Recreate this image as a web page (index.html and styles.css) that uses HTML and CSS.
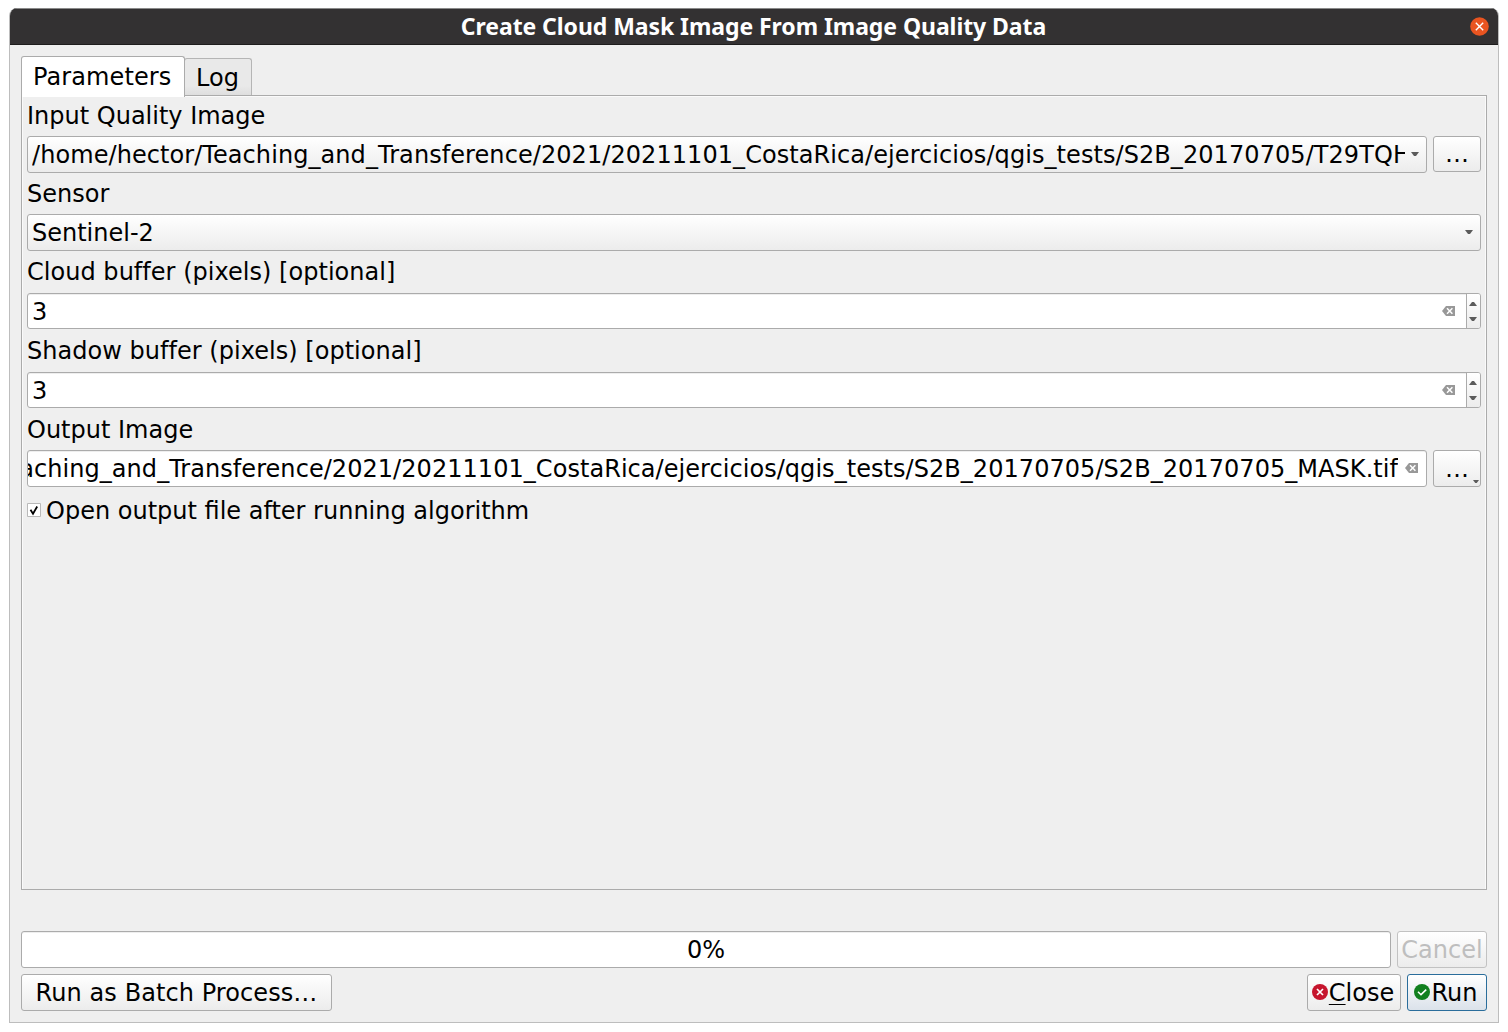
FILE: index.html
```html
<!DOCTYPE html>
<html lang="en">
<head>
<meta charset="utf-8">
<title>Create Cloud Mask Image From Image Quality Data</title>
<link rel="stylesheet" href="styles.css">
</head>
<body>
<svg class="defs" width="0" height="0" aria-hidden="true">
  <symbol id="down" viewBox="0 0 8 4"><path d="M0 0h8L5 4H3z" fill="#5b5b5b"/></symbol>
  <symbol id="up" viewBox="0 0 8 4"><path d="M0 4h8L5 0H3z" fill="#5b5b5b"/></symbol>
  <symbol id="clear" viewBox="0 0 13 10"><path d="M4 0h9v10H4L0 5z" fill="#989898"/><path d="M5 2.3l5.4 5.4M10.4 2.3l-5.4 5.4" stroke="#fff" stroke-width="1.5"/></symbol>
</svg>
<div class="window">
  <header class="titlebar">
    <h1 class="title">Create Cloud Mask Image From Image Quality Data</h1>
    <svg class="window-close" viewBox="0 0 19 19"><circle cx="9.5" cy="9.5" r="9.3" fill="#e95420"/><path d="M5.8 5.8l7.4 7.4M13.2 5.8l-7.4 7.4" stroke="#fff" stroke-width="1.4"/></svg>
  </header>
  <main class="content">
    <nav class="tabs">
      <div class="tab active">Parameters</div>
      <div class="tab">Log</div>
    </nav>
    <section class="pane">
      <div class="label first">Input Quality Image</div>
      <div class="row">
        <div class="box combo"><span class="value path">/home/hector/Teaching_and_Transference/2021/20211101_CostaRica/ejercicios/qgis_tests/S2B_20170705/T29TQH</span><svg class="arrow"><use href="#down"/></svg></div>
        <div class="box button browse short">…</div>
      </div>
      <div class="label sensor">Sensor</div>
      <div class="box combo"><span class="value">Sentinel-2</span><svg class="arrow"><use href="#down"/></svg></div>
      <div class="label cloud">Cloud buffer (pixels) [optional]</div>
      <div class="box spin"><span class="value">3</span><svg class="clear"><use href="#clear"/></svg><div class="steps"><svg class="arrow"><use href="#up"/></svg><svg class="arrow"><use href="#down"/></svg></div></div>
      <div class="label shadow">Shadow buffer (pixels) [optional]</div>
      <div class="box spin"><span class="value">3</span><svg class="clear"><use href="#clear"/></svg><div class="steps"><svg class="arrow"><use href="#up"/></svg><svg class="arrow"><use href="#down"/></svg></div></div>
      <div class="label output">Output Image</div>
      <div class="row">
        <div class="box line"><span class="value scrolled">aching_and_Transference/2021/20211101_CostaRica/ejercicios/qgis_tests/S2B_20170705/S2B_20170705_MASK.tif</span><svg class="clear"><use href="#clear"/></svg></div>
        <div class="box button browse menu">…<svg class="arrow corner"><use href="#down"/></svg></div>
      </div>
      <div class="check"><svg class="tick" viewBox="0 0 14 14"><path d="M.5 .5h13v13H.5z" fill="#fff" stroke="#b9b9b9"/><path d="M3.5 6.8L6 10.8 10.2 3.5" fill="none" stroke="#000" stroke-width="1.8"/></svg><span class="check-text">Open output file after running algorithm</span></div>
    </section>
    <div class="row progress-row">
      <div class="box progress">0%</div>
      <div class="box button cancel">Cancel</div>
    </div>
    <footer class="row actions">
      <div class="box button batch">Run as Batch Process…</div>
      <div class="box button close"><svg class="badge" viewBox="0 0 16 16"><circle cx="8" cy="8" r="8" fill="#c6152d"/><path d="M5 5l6 6M11 5l-6 6" stroke="#fff" stroke-width="1.7"/></svg><span><span class="mnemonic">C</span>lose</span></div>
      <div class="box button run"><svg class="badge" viewBox="0 0 16 16"><circle cx="8" cy="8" r="8" fill="#11801f"/><path d="M4 7.7l3 3 5.2-5" fill="none" stroke="#fff" stroke-width="1.6"/></svg><span>Run</span></div>
    </footer>
  </main>
</div>
</body>
</html>
```
FILE: styles.css
```css
* { box-sizing: border-box; }
body {
  margin: 0;
  padding: 8px 9px 9px;
  background: #fff;
  font: 24px/28px "DejaVu Sans", sans-serif;
  color: #000;
  white-space: nowrap;
}
.defs { display: block; width: 0; height: 0; }
.window {
  display: flex;
  flex-direction: column;
  height: 1015px;
  border: 1px solid #bdbdbd;
  border-top: 0;
  border-radius: 8px 8px 0 0;
  background: #efefef;
  overflow: hidden;
}
.titlebar {
  display: grid;
  grid-template-columns: 27px 1fr 28px;
  align-items: center;
  height: 37px;
  flex: none;
  background: #333132;
  border-top: 1px solid #8a8a8a;
  border-bottom: 1px solid #1e1d1d;
  color: #fff;
}
.title {
  grid-column: 2;
  margin: 0;
  padding-bottom: 2px;
  text-align: center;
  font: bold 23px/30px "Noto Sans", sans-serif;
  letter-spacing: -0.07px;
}
.window-close { width: 19px; height: 19px; }
.content {
  flex: 1;
  display: flex;
  flex-direction: column;
  padding: 11px;
}
.tabs {
  display: flex;
  align-items: flex-end;
  height: 39px;
  flex: none;
}
.tab {
  height: 37px;
  padding: 5px 11px 0;
  border: 1px solid #b5b5b5;
  border-bottom: 0;
  border-radius: 3px 3px 0 0;
  background: linear-gradient(#e9e9e9 75%, #dedede);
  width: 68px;
  margin-left: -1px;
}
.tab.active {
  position: relative;
  width: 164px;
  height: 41px;
  margin: 0 0 -2px;
  padding-top: 6px;
  border-color: #ababab;
  background: #fff;
  letter-spacing: 0.1px;
}
.pane {
  height: 795px;
  flex: none;
  padding: 0 5px;
  border: 1px solid #ababab;
  box-shadow: inset 1px 1px #fafafa, inset -1px 0 #fafafa;
}
.label { height: 42px; padding-top: 7px; letter-spacing: 0.03px; }
.label.first { height: 40px; padding-top: 6px; letter-spacing: 0; }
.label.sensor { height: 41px; letter-spacing: 0; }
.label.shadow { height: 43px; padding-top: 8px; }
.label.output { padding-top: 8px; letter-spacing: 0; }
.row { display: flex; gap: 6px; }
.box {
  display: flex;
  align-items: center;
  height: 37px;
  border: 1px solid #ababab;
  border-radius: 3px;
  background: #fff;
  overflow: hidden;
}
.combo, .button { background: linear-gradient(#fff, #ececec); }
.row .combo, .line, .progress { flex: 1; min-width: 0; }
.combo { padding: 0 7px 0 4px; }
.combo .arrow { margin-bottom: 1px; }
.value { flex: 1; min-width: 0; overflow: hidden; }
.path { margin-right: 6px; letter-spacing: 0.07px; }
.arrow { width: 8px; height: 4px; flex: none; display: block; }
.button { justify-content: center; }
.browse { width: 48px; }
.short { height: 36px; }
.spin { height: 36px; padding-left: 4px; box-shadow: inset 0 1px #eee; }
.spin .value { padding-top: 1px; }
.clear { width: 13px; height: 10px; flex: none; }
.spin .clear { margin-right: 11px; }
.steps {
  display: flex;
  flex-direction: column;
  justify-content: space-between;
  align-items: flex-start;
  width: 14px;
  height: 34px;
  padding: 8px 0 7px 2px;
  border-left: 1px solid #ababab;
  background: linear-gradient(#fff, #ececec);
}
.line { padding-right: 8px; box-shadow: inset 0 1px #eee; }
.line .clear { margin-bottom: 1px; }
.scrolled {
  display: flex;
  justify-content: flex-end;
  margin-right: 7px;
  letter-spacing: 0.05px;
}
.menu { position: relative; }
.corner { position: absolute; right: 1px; bottom: 3px; width: 6px; height: 3px; }
.check { display: flex; align-items: center; gap: 5px; height: 46px; }
.check-text { padding-top: 2px; }
.tick { width: 14px; height: 14px; }
.progress-row { margin-top: 41px; }
.progress { justify-content: center; box-shadow: inset 0 1px #eee; }
.cancel { width: 90px; color: #bebebe; border-color: #c2c2c2; }
.actions { margin-top: 6px; }
.batch { width: 311px; margin-right: auto; letter-spacing: 0.08px; }
.close { width: 94px; padding-right: 2px; }
.run { width: 80px; padding-right: 2px; border-color: #2a6d9b; background: linear-gradient(#fff, #dbe2ea); }
.badge { width: 16px; height: 16px; margin: 0 1px 1px 0; flex: none; }
.mnemonic { text-decoration: underline; text-decoration-thickness: 1px; text-underline-offset: 3px; }
```
